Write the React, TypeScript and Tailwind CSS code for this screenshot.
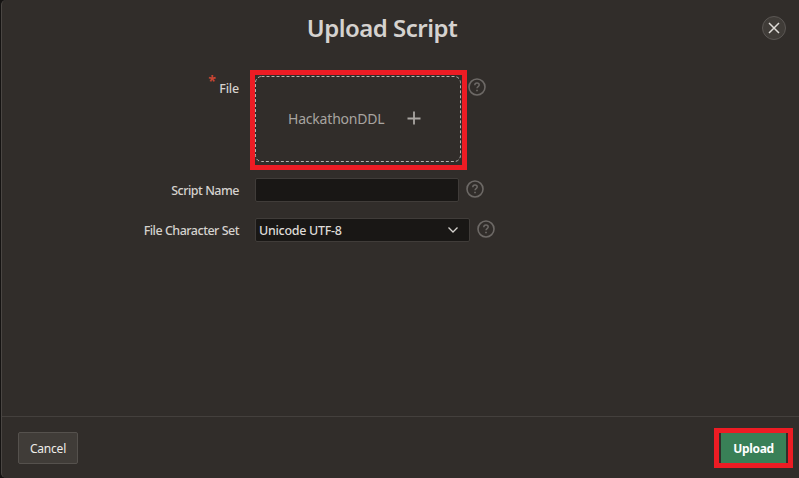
import React from "react";

function HelpIcon({ className = "" }: { className?: string }) {
  return (
    <svg className={`h-[18px] w-[18px] shrink-0 ${className}`} viewBox="0 0 18 18" fill="none" stroke="#6d6966">
      <circle cx="9" cy="9" r="8" strokeWidth="1.6" />
      <path d="M6.8 7.2C6.8 5.8 7.8 5 9 5s2.2.8 2.2 2c0 1.5-2.2 1.7-2.2 3.3" strokeWidth="1.5" />
      <path d="M9 11.7v1.6" strokeWidth="1.7" />
    </svg>
  );
}

function Label({ children, className = "" }: { children: React.ReactNode; className?: string }) {
  return (
    <label className={`w-[237px] shrink-0 text-right text-[12.5px] leading-4 font-medium tracking-[-0.5px] text-[#d5d2ce] ${className}`}>
      {children}
    </label>
  );
}

export default function App() {
  return (
    <div className="h-[478px] w-[799px] bg-[#151312] pl-px font-['Noto_Sans','Open_Sans',sans-serif]">
      <div className="flex h-full flex-col overflow-hidden rounded-l-[5px] border-l border-[#4a4643] bg-[#312d2a]">
        <header className="relative h-[70px] shrink-0">
          <h1 className="pt-3 pr-[37px] text-center text-[24px] leading-8 font-semibold tracking-[-0.5px] text-[#d5d2cf]">
            Upload Script
          </h1>
          <button className="absolute top-[16px] right-[13px] flex h-6 w-6 items-center justify-center rounded-full border border-[#5b5754] bg-[#403c38]">
            <svg className="h-3 w-3" viewBox="0 0 12 12" stroke="#dedbd7" strokeWidth="1.5">
              <path d="M1 1l10 10M11 1L1 11" />
            </svg>
          </button>
        </header>

        <main className="flex flex-1 flex-col">
          <div className="flex h-[108px]">
            <Label className="pt-[11px]">
              <span className="relative tracking-[-0.2px]">
                <span className="absolute -top-[7px] -left-[11px] text-[14px] font-bold text-[#c74634]">*</span>
                File
              </span>
            </Label>
            <div className="ml-[11px] h-[100px] w-[217px] border-[5px] border-[#ed1c24] pt-px">
              <div className="relative flex h-[86px] w-[207px] items-center pl-[33px]">
                <svg className="absolute inset-0" width="207" height="86" fill="none" stroke="#b5b1ad">
                  <rect x="0.5" y="0.5" width="205" height="85" rx="6" strokeDasharray="3 2" />
                </svg>
                <span className="text-[14px] leading-5 tracking-[-0.2px] text-[#a8a4a0]">HackathonDDL</span>
                <svg className="absolute top-[35px] left-[152px] h-[14px] w-[14px]" viewBox="0 0 14 14" stroke="#aaa6a2" strokeWidth="1.8">
                  <path d="M7 .5v13M.5 7.5h13" />
                </svg>
              </div>
            </div>
            <HelpIcon className="mt-2 ml-px" />
          </div>

          <div className="flex h-10">
            <Label className="pt-[5px]">Script Name</Label>
            <input className="ml-4 h-6 w-[204px] rounded-[2px] border border-[#403c39] bg-[#191715]" />
            <HelpIcon className="mt-[2px] ml-[7px]" />
          </div>

          <div className="flex h-10">
            <Label className="pt-[5px]">File Character Set</Label>
            <div className="ml-4 flex h-6 w-[215px] items-center justify-between rounded-[2px] border border-[#403c39] bg-[#191715] pr-[11px] pl-[3px] text-[12.5px] font-medium tracking-[-0.3px] text-[#dedbd7]">
              <span className="pt-[2px]">Unicode UTF-8</span>
              <svg className="h-[6px] w-[10px]" viewBox="0 0 10 6" fill="none" stroke="#d5d2ce" strokeWidth="1.3">
                <path d="M.5.5L5 5 9.5.5" />
              </svg>
            </div>
            <HelpIcon className="mt-[2px] ml-[7px]" />
          </div>
        </main>

        <footer className="flex h-[62px] shrink-0 justify-between border-t border-[#44403d] pt-[11px] pr-[6px] pl-4">
          <button className="mt-1 h-8 w-[60px] rounded-[2px] border border-[#55514d] bg-[#403c38] pt-[2px] text-[12px] tracking-[-0.2px] text-[#eeece9]">
            Cancel
          </button>
          <div className="flex h-10 w-[79px] justify-center border-[5px] border-[#ed1c24]">
            <button className="h-[30px] w-[65px] bg-[#398057] pt-[2px] text-[12px] font-bold tracking-[-0.3px] text-white">Upload</button>
          </div>
        </footer>
      </div>
    </div>
  );
}
